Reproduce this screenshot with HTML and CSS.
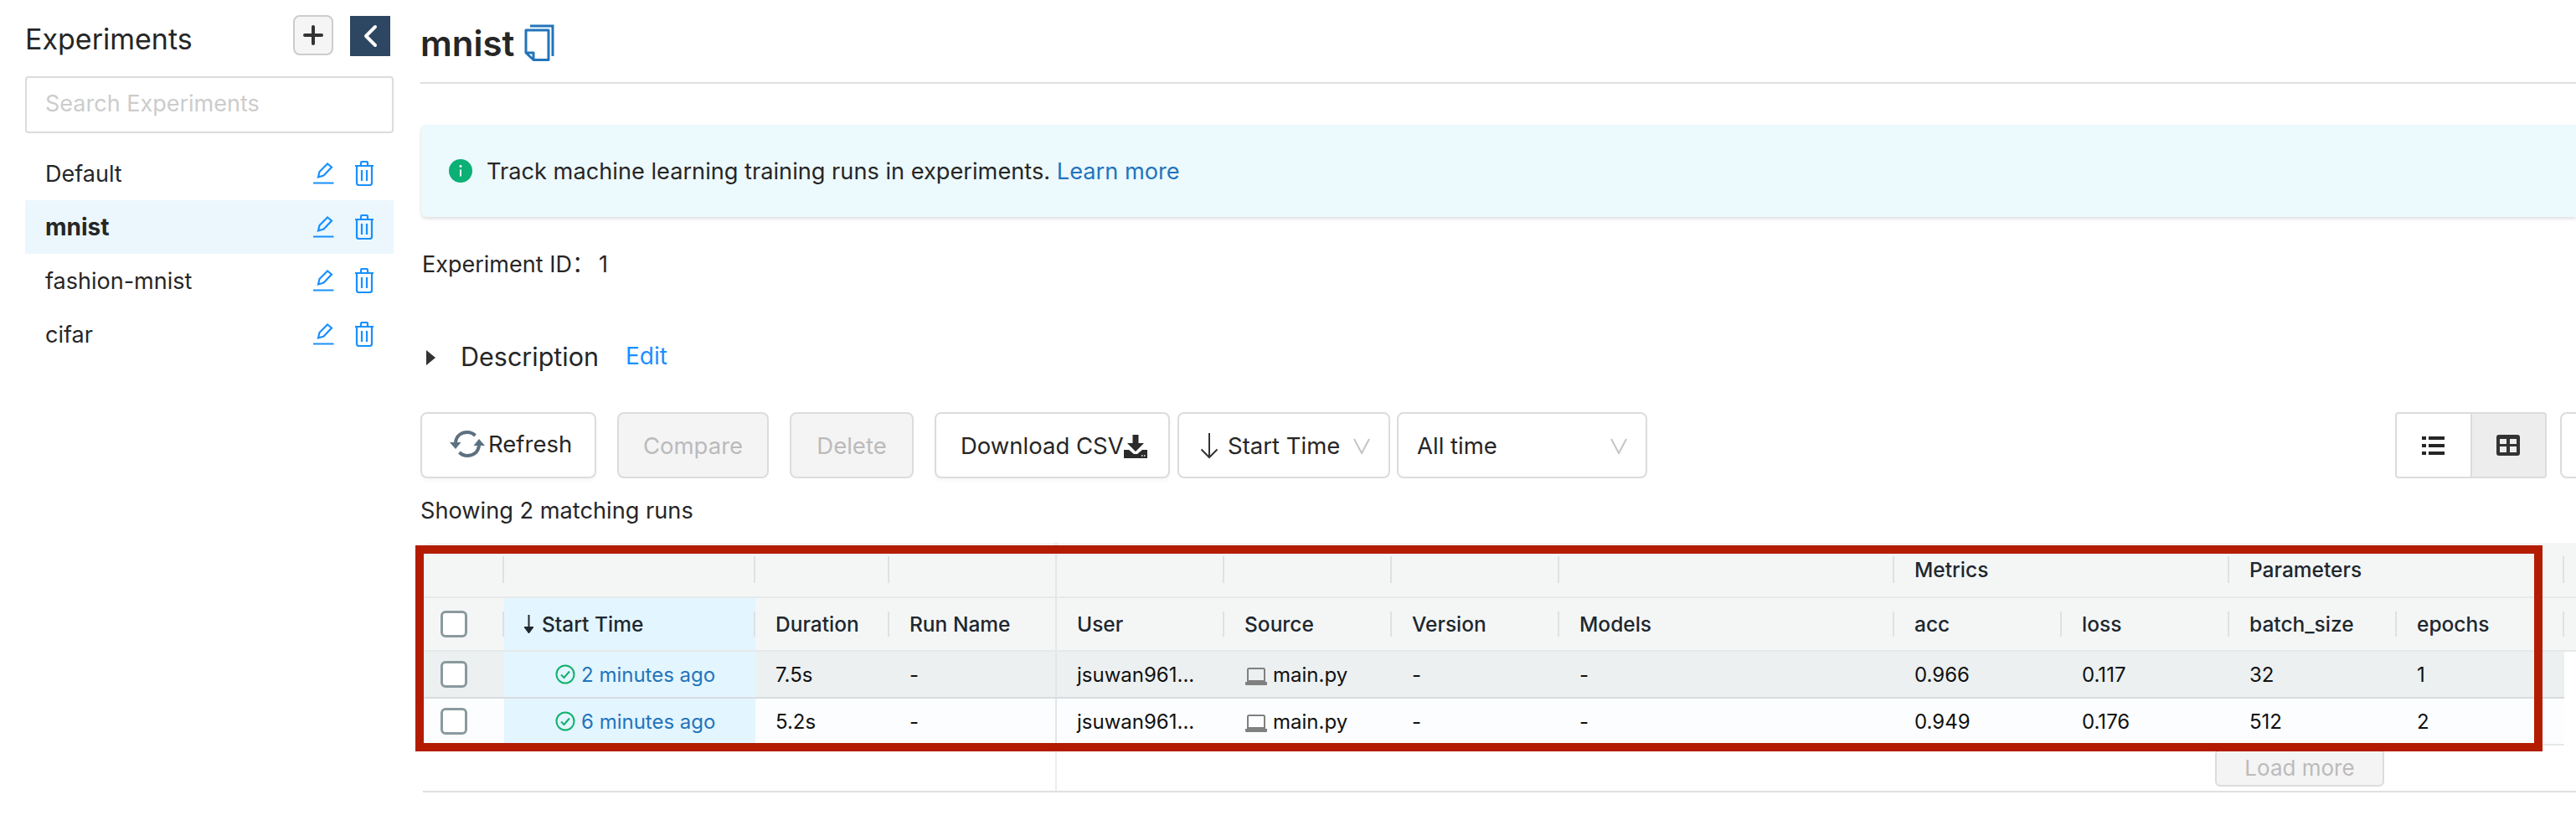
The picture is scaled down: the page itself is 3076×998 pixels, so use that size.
FILE: index.html
```html
<!DOCTYPE html>
<html lang="en">
<head>
<meta charset="utf-8">
<title>mnist - Experiments</title>
<link rel="stylesheet" href="styles.css">
</head>
<body>
<div class="app">
  <aside class="sidebar">
    <div class="side-head">
      <h2 class="side-title">Experiments</h2>
      <button class="add-btn" aria-label="New experiment">
        <svg width="24" height="24" viewBox="0 0 24 24"><path d="M12 2v20M2 12h20" stroke="#333" stroke-width="4" stroke-linecap="round" fill="none"/></svg>
      </button>
      <button class="collapse-btn" aria-label="Collapse">
        <svg width="18" height="28" viewBox="0 0 18 28"><path d="M15 3 4 14l11 11" stroke="#fff" stroke-width="4" stroke-linecap="round" stroke-linejoin="round" fill="none"/></svg>
      </button>
    </div>
    <div class="search">Search Experiments</div>
    <ul class="exp-list">
      <li class="exp"><span class="exp-name">Default</span>
        <svg class="ic-edit" viewBox="0 0 26 26"><path d="M7 17.500 8.500 11 18 1.500 23 5.500 13.500 15.500Z M1 24.500H25.500" fill="none" stroke="#1890ff" stroke-width="2.200"/></svg>
        <svg class="ic-trash" viewBox="0 0 24 30"><path d="M1 6H23M8 6V2.500Q8 1 9.500 1H14.500Q16 1 16 2.500V6M3 6V26.500Q3 29 5.500 29H18.500Q21 29 21 26.500V6M9 11V24M15 11V24" fill="none" stroke="#1890ff" stroke-width="2.200"/></svg>
      </li>
      <li class="exp exp-active"><span class="exp-name">mnist</span>
        <svg class="ic-edit" viewBox="0 0 26 26"><path d="M7 17.500 8.500 11 18 1.500 23 5.500 13.500 15.500Z M1 24.500H25.500" fill="none" stroke="#1890ff" stroke-width="2.200"/></svg>
        <svg class="ic-trash" viewBox="0 0 24 30"><path d="M1 6H23M8 6V2.500Q8 1 9.500 1H14.500Q16 1 16 2.500V6M3 6V26.500Q3 29 5.500 29H18.500Q21 29 21 26.500V6M9 11V24M15 11V24" fill="none" stroke="#1890ff" stroke-width="2.200"/></svg>
      </li>
      <li class="exp"><span class="exp-name">fashion-mnist</span>
        <svg class="ic-edit" viewBox="0 0 26 26"><path d="M7 17.500 8.500 11 18 1.500 23 5.500 13.500 15.500Z M1 24.500H25.500" fill="none" stroke="#1890ff" stroke-width="2.200"/></svg>
        <svg class="ic-trash" viewBox="0 0 24 30"><path d="M1 6H23M8 6V2.500Q8 1 9.500 1H14.500Q16 1 16 2.500V6M3 6V26.500Q3 29 5.500 29H18.500Q21 29 21 26.500V6M9 11V24M15 11V24" fill="none" stroke="#1890ff" stroke-width="2.200"/></svg>
      </li>
      <li class="exp"><span class="exp-name">cifar</span>
        <svg class="ic-edit" viewBox="0 0 26 26"><path d="M7 17.500 8.500 11 18 1.500 23 5.500 13.500 15.500Z M1 24.500H25.500" fill="none" stroke="#1890ff" stroke-width="2.200"/></svg>
        <svg class="ic-trash" viewBox="0 0 24 30"><path d="M1 6H23M8 6V2.500Q8 1 9.500 1H14.500Q16 1 16 2.500V6M3 6V26.500Q3 29 5.500 29H18.500Q21 29 21 26.500V6M9 11V24M15 11V24" fill="none" stroke="#1890ff" stroke-width="2.200"/></svg>
      </li>
    </ul>
  </aside>

  <main class="main">
    <header class="title-bar">
      <h1 class="title">mnist</h1>
      <svg class="ic-copy" viewBox="0 0 36 44"><path d="M7 2H34V38" fill="none" stroke="#2374bb" stroke-width="3"/><path d="M2 7H29V42.500H11L2 34Z M2 34H11V42.500" fill="none" stroke="#2374bb" stroke-width="3" stroke-linejoin="round"/></svg>
    </header>

    <div class="alert">
      <svg class="ic-info" viewBox="0 0 28 28"><circle cx="14" cy="14" r="14" fill="#0cb074"/><path d="M14 12.500V20.500" stroke="#fff" stroke-width="2"/><circle cx="14" cy="8.500" r="1.400" fill="#fff"/></svg>
      <span class="alert-text">Track machine learning training runs in experiments. <a class="link">Learn more</a></span>
    </div>

    <div class="exp-id"><span class="exp-id-label">Experiment ID：</span><span>1</span></div>

    <div class="desc">
      <svg class="ic-caret" viewBox="0 0 11 18"><path d="M0 0 11 9 0 18Z" fill="#333"/></svg>
      <span class="desc-title">Description</span>
      <a class="desc-edit">Edit</a>
    </div>

    <div class="toolbar">
      <button class="btn btn-refresh">
        <svg class="ic-refresh" viewBox="0 0 42 32"><path d="M7 14C8 6 14 2 21 2c4 0 7 1.500 9.500 4M35 18C34 26 28 30 21 30c-4 0-7-1.500-9.500-4" fill="none" stroke="#5c7080" stroke-width="4"/><path d="M0 14H13.500L7 22ZM28.500 18H42L35 10Z" fill="#5c7080"/></svg>
        <span>Refresh</span>
      </button>
      <button class="btn btn-disabled btn-compare">Compare</button>
      <button class="btn btn-disabled btn-delete">Delete</button>
      <button class="btn btn-download">
        <span>Download CSV</span>
        <svg class="ic-download" viewBox="0 0 28 28"><path d="M10.500 0H17.500V10H24L14 20 4 10H10.500Z" fill="#2b2b2b"/><path d="M0 18H6L12 23H16L22 18H28V28H0Z" fill="#2b2b2b"/><path d="M21 25H22.500M24 25H25.500" stroke="#fff" stroke-width="1.500"/></svg>
      </button>
      <div class="btn select select-sort">
        <svg class="ic-arrow" viewBox="0 0 22 32"><path d="M11 1V30M1.500 20.500 11 30l9.500-9.500" fill="none" stroke="#333" stroke-width="2"/></svg>
        <span class="select-text">Start Time</span>
        <svg class="ic-chev" viewBox="0 0 20 20"><path d="M1 2 10 19 19 2" fill="none" stroke="#c4c4c4" stroke-width="2"/></svg>
      </div>
      <div class="btn select select-time">
        <span class="select-text">All time</span>
        <svg class="ic-chev" viewBox="0 0 20 20"><path d="M1 2 10 19 19 2" fill="none" stroke="#c4c4c4" stroke-width="2"/></svg>
      </div>
      <div class="spacer"></div>
      <div class="toggle">
        <span class="toggle-item">
          <svg class="ic-list" viewBox="0 0 27 23"><path d="M0 1H5V5H0ZM8 1H27V5H8ZM0 10H5V14H0ZM8 10H27V14H8ZM0 19H5V23H0ZM8 19H27V23H8Z" fill="#262626"/></svg>
        </span>
        <span class="toggle-item toggle-on">
          <svg class="ic-table" viewBox="0 0 28 25"><rect width="28" height="25" rx="3" fill="#333"/><path d="M4 5H12V11H4ZM16 5H24V11H16ZM4 14H12V21H4ZM16 14H24V21H16Z" fill="#ededed"/></svg>
        </span>
      </div>
      <div class="btn btn-next"></div>
    </div>

    <p class="count">Showing 2 matching runs</p>

    <section class="grid-wrap">
      <div class="head-group">
        <div class="hc hc-div"></div>
        <div class="hc hc-div"></div>
        <div class="hc hc-div"></div>
        <div class="hc hc-pin"></div>
        <div class="hc hc-div"></div>
        <div class="hc hc-div"></div>
        <div class="hc hc-div"></div>
        <div class="hc hc-div"></div>
        <div class="hc hc-div hc-text">Metrics</div>
        <div class="hc hc-div hc-text">Parameters</div>
      </div>
      <div class="head-cols">
        <div class="hc hc-check hc-div"><span class="check"></span></div>
        <div class="hc hc-div hc-text hl"><svg class="ic-sort" viewBox="0 0 11 22"><path d="M5.500 0V20M1 15 5.500 21 10 15Z" fill="#20272e" stroke="#20272e" stroke-width="2"/></svg>Start Time</div>
        <div class="hc hc-div hc-text">Duration</div>
        <div class="hc hc-pin hc-text">Run Name</div>
        <div class="hc hc-div hc-text">User</div>
        <div class="hc hc-div hc-text">Source</div>
        <div class="hc hc-div hc-text">Version</div>
        <div class="hc hc-div hc-text">Models</div>
        <div class="hc hc-div hc-text">acc</div>
        <div class="hc hc-div hc-text">loss</div>
        <div class="hc hc-div hc-text">batch_size</div>
        <div class="hc hc-div hc-text">epochs</div>
        <div class="hc hc-fill"></div>
      </div>
      <div class="row row-hover">
        <div class="c c-check"><span class="check"></span></div>
        <div class="c c-time hl"><svg class="ic-ok" viewBox="0 0 24 24"><circle cx="12" cy="12" r="10.500" fill="none" stroke="#10b26c" stroke-width="2"/><path d="M7 12.500 10.500 16 17 8.500" fill="none" stroke="#10b26c" stroke-width="2"/></svg><a class="link">2 minutes ago</a></div>
        <div class="c">7.5s</div>
        <div class="c c-pin">-</div>
        <div class="c">jsuwan961...</div>
        <div class="c"><svg class="ic-laptop" viewBox="0 0 26 21"><path d="M3 2.500Q3 1 4.500 1H21.500Q23 1 23 2.500V16H3Z" fill="none" stroke="#808080" stroke-width="2"/><path d="M0 17H26V20Q26 21 25 21H1Q0 21 0 20Z" fill="#808080"/></svg>main.py</div>
        <div class="c">-</div>
        <div class="c">-</div>
        <div class="c">0.966</div>
        <div class="c">0.117</div>
        <div class="c">32</div>
        <div class="c">1</div>
      </div>
      <div class="row">
        <div class="c c-check"><span class="check"></span></div>
        <div class="c c-time hl"><svg class="ic-ok" viewBox="0 0 24 24"><circle cx="12" cy="12" r="10.500" fill="none" stroke="#10b26c" stroke-width="2"/><path d="M7 12.500 10.500 16 17 8.500" fill="none" stroke="#10b26c" stroke-width="2"/></svg><a class="link">6 minutes ago</a></div>
        <div class="c">5.2s</div>
        <div class="c c-pin">-</div>
        <div class="c">jsuwan961...</div>
        <div class="c"><svg class="ic-laptop" viewBox="0 0 26 21"><path d="M3 2.500Q3 1 4.500 1H21.500Q23 1 23 2.500V16H3Z" fill="none" stroke="#808080" stroke-width="2"/><path d="M0 17H26V20Q26 21 25 21H1Q0 21 0 20Z" fill="#808080"/></svg>main.py</div>
        <div class="c">-</div>
        <div class="c">-</div>
        <div class="c">0.949</div>
        <div class="c">0.176</div>
        <div class="c">512</div>
        <div class="c">2</div>
      </div>
      <div class="grid-foot">
        <div class="foot-pin"></div>
        <button class="load-more">Load more</button>
      </div>
      <div class="red-frame"></div>
    </section>
  </main>
</div>
</body>
</html>
```
FILE: styles.css
```css
* { box-sizing: border-box; }
html, body { margin: 0; height: 100%; overflow: hidden; background: #fff; }
body { font-family: Inter, "Noto Sans CJK SC", "Noto Sans", sans-serif; font-size: 27px; color: #262626; }
button { font: inherit; color: inherit; }
h1, h2, p, ul { margin: 0; padding: 0; }
a { text-decoration: none; }

.app { display: flex; height: 998px; }

/* sidebar */
.sidebar { width: 502px; flex: none; padding-left: 30px; }
.side-head { display: flex; align-items: flex-start; height: 91px; padding-top: 18px; width: 440px; }
.side-title { font-size: 34px; font-weight: 400; line-height: 48px; margin-top: 5px; width: 320px; }
.add-btn { width: 48px; height: 48px; padding: 0; border: 2px solid #ccc; border-radius: 8px; background: #f5f5f5; display: flex; align-items: center; justify-content: center; }
.collapse-btn { width: 48px; height: 48px; margin: 1px 0 0 20px; padding: 0; border: 0; background: #2d4661; display: flex; align-items: center; justify-content: center; }
.search { width: 440px; height: 68px; border: 2px solid #dcdcdc; border-radius: 4px; padding-left: 22px; line-height: 62px; color: #ccc; }
.exp-list { list-style: none; width: 440px; margin-top: 16px; }
.exp { display: flex; align-items: center; height: 64px; padding-left: 24px; }
.exp-active { background: #ebf7fd; font-weight: 700; font-size: 28px; }
.exp-name { flex: 1; }
.ic-edit { width: 26px; height: 26px; }
.ic-trash { width: 24px; height: 30px; margin: 0 23px 0 24px; }

/* main */
.main { flex: 1; min-width: 0; }
.title-bar { display: flex; align-items: flex-start; gap: 12px; height: 100px; border-bottom: 2px solid #e0e0e0; padding-top: 27px; }
.title { font-size: 42px; font-weight: 600; line-height: 50px; }
.ic-copy { width: 36px; height: 44px; flex: none; margin-top: 2px; }
.alert { display: flex; align-items: center; gap: 17px; height: 110px; margin: 49px 0 0 1px; padding-left: 33px; background: #ecf9fd; border-radius: 6px 0 0 6px; box-shadow: 0 2px 4px rgba(0, 0, 0, .14); }
.alert-text { font-size: 27.200px; }
.ic-info { width: 28px; height: 28px; flex: none; }
.link { color: #2374bb; }
.exp-id { display: flex; margin: 40px 0 0 2px; height: 34px; line-height: 34px; white-space: nowrap; }
.exp-id-label { flex: none; width: 211px; }
.desc { display: flex; align-items: center; margin-top: 72px; height: 40px; }
.ic-caret { width: 11px; height: 18px; margin: 3px 30px 0 7px; }
.desc-title { font-size: 30.500px; }
.desc-edit { color: #1890ff; margin-left: 32px; font-size: 28px; }

/* toolbar */
.toolbar { display: flex; margin-top: 47px; margin-right: -44px; height: 79px; font-size: 27.500px; }
.btn { height: 79px; display: flex; align-items: center; border: 2px solid #dcdcdc; border-radius: 8px; background: #fff; padding: 0; }
.btn-refresh { width: 210px; padding-left: 33px; gap: 4px; box-shadow: 0 3px 4px rgba(0, 0, 0, .03); }
.btn-refresh span { margin-top: -4px; }
.ic-refresh { width: 42px; height: 32px; margin-top: -4px; }
.btn-disabled { background: #f4f4f4; color: #bbb; justify-content: center; }
.btn-compare { width: 181px; margin-left: 25px; }
.btn-delete { width: 148px; margin-left: 25px; }
.btn-download { width: 281px; margin-left: 25px; padding-left: 29px; box-shadow: 0 3px 4px rgba(0, 0, 0, .03); }
.ic-download { width: 28px; height: 28px; margin-top: 2px; flex: none; }
.select { flex: none; }
.select-sort { width: 254px; margin-left: 9px; padding-left: 25px; }
.select-time { width: 299px; margin-left: 8px; padding-left: 22px; }
.select-text { flex: 1; }
.ic-arrow { width: 22px; height: 32px; margin-right: 11px; }
.ic-chev { width: 20px; height: 20px; margin-right: 22px; }
.spacer { flex: 1; }
.toggle { display: flex; width: 181px; height: 79px; border: 2px solid #dcdcdc; border-radius: 4px; overflow: hidden; }
.toggle-item { flex: 1; display: flex; align-items: center; justify-content: center; }
.toggle-on { background: #ededed; border-left: 2px solid #dcdcdc; }
.ic-list { width: 27px; height: 23px; }
.ic-table { width: 28px; height: 25px; }
.btn-next { width: 63px; margin-left: 16px; }
.count { margin-top: 22px; height: 34px; line-height: 34px; font-size: 27.200px; }

/* grid */
.grid-wrap { position: relative; margin: 21px 0 0 3px; font-size: 24px; }
.head-group, .head-cols, .row { display: grid; grid-template-columns: 97px 300px 160px 200px 200px 200px 200px 400px 200px 200px 200px 200px; }
.head-group { grid-template-columns: 97px 300px 160px 200px 200px 200px 200px 400px 400px 400px 1fr; height: 64px; background: #f4f6f6; border-radius: 8px 0 0 0; }
.head-cols { grid-template-columns: 97px 300px 160px 200px 200px 200px 200px 400px 200px 200px 200px 200px 1fr; height: 66px; background: #f4f6f6; border-top: 2px solid #e6e9ea; border-bottom: 2px solid #e6e9ea; }
.hc { position: relative; display: flex; align-items: center; padding-left: 24px; font-weight: 500; font-size: 24.500px; color: #20272e; }
.hc-div::after { content: ""; position: absolute; right: 0; top: 16px; bottom: 16px; width: 2px; background: #dde1e3; }
.hc-pin { border-right: 2px solid #e3e6e8; }
.hc-check { padding-left: 21px; }
.hc-text { white-space: nowrap; }
.hc-fill { padding: 0; }
.hl { background: #e3f5fe; }
.ic-sort { width: 11px; height: 22px; margin-right: 10px; }
.check { display: block; width: 32px; height: 32px; border: 3px solid #8a9a9e; border-radius: 6px; background: #fff; }
.row { width: 2557px; height: 56px; background: #fbfdfe; border-bottom: 2px solid #e6e9ea; }
.row-hover { background: #ecf0f1; border-bottom-color: #d8dce0; }
.c { display: flex; align-items: center; padding-left: 24px; color: #111; white-space: nowrap; }
.c-check { padding-left: 21px; }
.c-pin { border-right: 2px solid #e3e6e8; }
.c-time { padding-left: 61px; gap: 7px; }
.ic-ok { width: 24px; height: 24px; flex: none; }
.ic-laptop { width: 26px; height: 21px; margin: 4px 7px 0 1px; flex: none; }
.grid-foot { display: flex; align-items: flex-start; height: 56px; border-bottom: 2px solid #e0e0e0; }
.foot-pin { width: 757px; height: 54px; border-right: 2px solid #eceeef; }
.load-more { width: 202px; height: 45px; margin: 4px 0 0 1383px; padding: 0; border: 2px solid #dcdcdc; border-radius: 6px; background: #f4f4f4; color: #bbb; font-size: 26px; line-height: 36px; }
.red-frame { position: absolute; left: -9px; top: 3px; width: 2540px; height: 246px; border: 10px solid #b31c00; pointer-events: none; }
```
